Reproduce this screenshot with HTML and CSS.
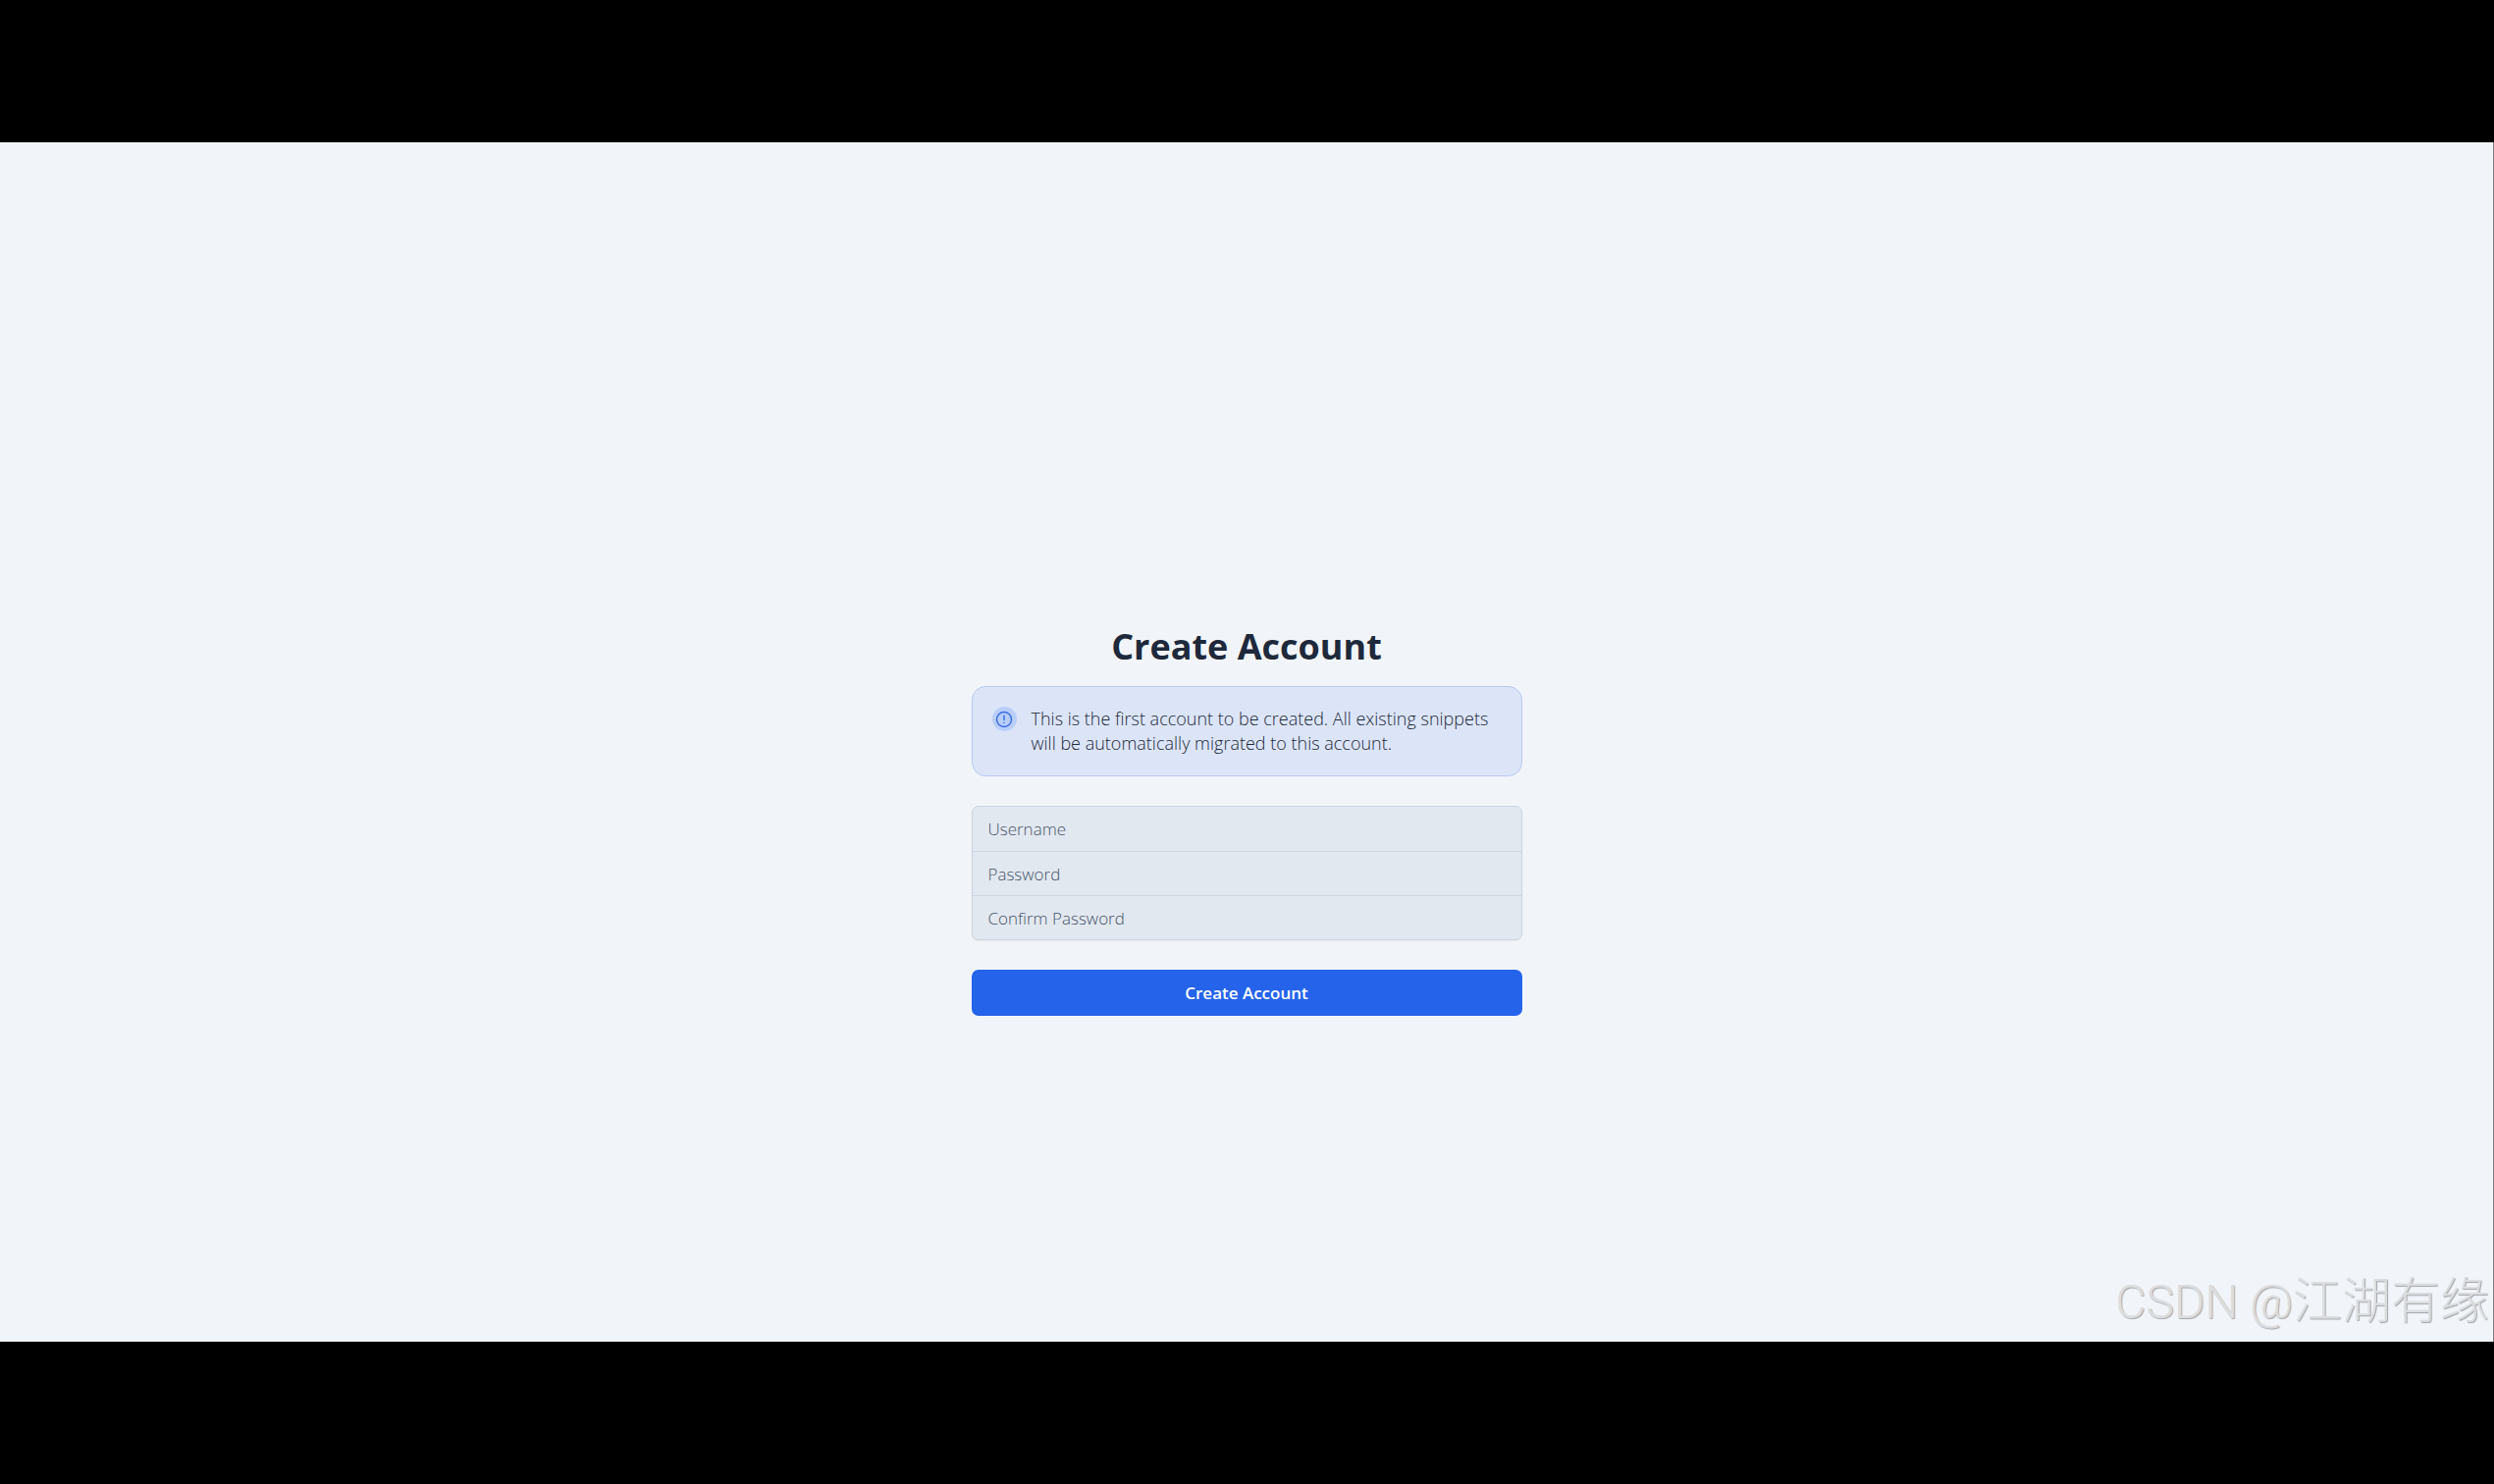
FILE: index.html
```html
<!DOCTYPE html>
<html lang="en">
<head>
<meta charset="utf-8">
<title>Create Account</title>
<meta name="viewport" content="width=device-width, initial-scale=1">
<link rel="stylesheet" href="styles.css">
</head>
<body>
<main class="stage">
  <form class="register">
    <h1 class="title">Create Account</h1>
    <div class="notice">
      <span class="notice-icon">
        <svg viewBox="0 0 24 24" width="18" height="18" fill="none" stroke="currentColor" stroke-width="2" stroke-linecap="round" aria-hidden="true">
          <circle cx="12" cy="12" r="10"/>
          <path d="M12 7v5.500M12 16.500v.1"/>
        </svg>
      </span>
      <p class="notice-text">This is the first account to be created. All existing snippets will be automatically migrated to this account.</p>
    </div>
    <div class="fields">
      <input class="field" type="text" placeholder="Username" aria-label="Username">
      <input class="field" type="password" placeholder="Password" aria-label="Password">
      <input class="field" type="password" placeholder="Confirm Password" aria-label="Confirm Password">
    </div>
    <button class="submit" type="submit">Create Account</button>
  </form>
  <p class="watermark"><span class="site">CSDN @</span>江湖有缘</p>
</main>
</body>
</html>
```
FILE: styles.css
```css
* {
  box-sizing: border-box;
}

body {
  margin: 0;
  min-height: 100vh;
  padding: 145px 0;
  display: flex;
  background: #000;
  color: #1e293b;
  font-family: "Open Sans", "Noto Sans", sans-serif;
}

.stage {
  position: relative;
  flex: 1;
  display: flex;
  align-items: center;
  justify-content: center;
  padding: 160px 16px 0;
  background: #f1f5f9;
  border-right: 1px solid #808080;
}

.register {
  width: 100%;
  max-width: 561px;
  display: flex;
  flex-direction: column;
}

.title {
  margin: 0 0 18px;
  font-size: 36px;
  line-height: 44px;
  font-weight: 700;
  text-align: center;
}

.notice {
  display: flex;
  gap: 15px;
  min-height: 92px;
  margin-bottom: 30px;
  padding: 20px;
  background: #dce5f8;
  border: 1px solid #b9caf2;
  border-radius: 14px;
}

.notice-icon {
  flex: none;
  display: grid;
  place-items: center;
  width: 25px;
  height: 25px;
  border-radius: 50%;
  background: #b9cef8;
  color: #3b6fe6;
}

.notice-text {
  margin: 0;
  font-size: 18px;
  line-height: 25px;
  font-weight: 300;
}

.fields {
  display: flex;
  flex-direction: column;
  margin-bottom: 30px;
  overflow: hidden;
  border: 1px solid #cbd5e1;
  border-radius: 7px;
  background: #e2e8f0;
  box-shadow: 0 1px 2px rgba(0, 0, 0, 0.05);
}

.field {
  height: 45px;
  padding: 0 16px;
  border: 0;
  border-radius: 0;
  background: transparent;
  color: #1e293b;
  font: 300 17px "Open Sans", "Noto Sans", sans-serif;
}

.field + .field {
  border-top: 1px solid #cbd5e1;
}

.field::placeholder {
  color: #475569;
  opacity: 1;
}

.submit {
  height: 47px;
  border: 0;
  border-radius: 7px;
  background: #2563eb;
  color: #fff;
  font: 600 17px "Open Sans", "Noto Sans", sans-serif;
}

.watermark {
  position: absolute;
  right: 4px;
  bottom: 10px;
  margin: 0;
  color: #dcdddf;
  font: 300 50px/60px "Noto Sans CJK SC", sans-serif;
  text-shadow: 1px 1px 1px #a4a6aa;
}

.site {
  font-family: Roboto, sans-serif;
  font-size: 48px;
}
```
